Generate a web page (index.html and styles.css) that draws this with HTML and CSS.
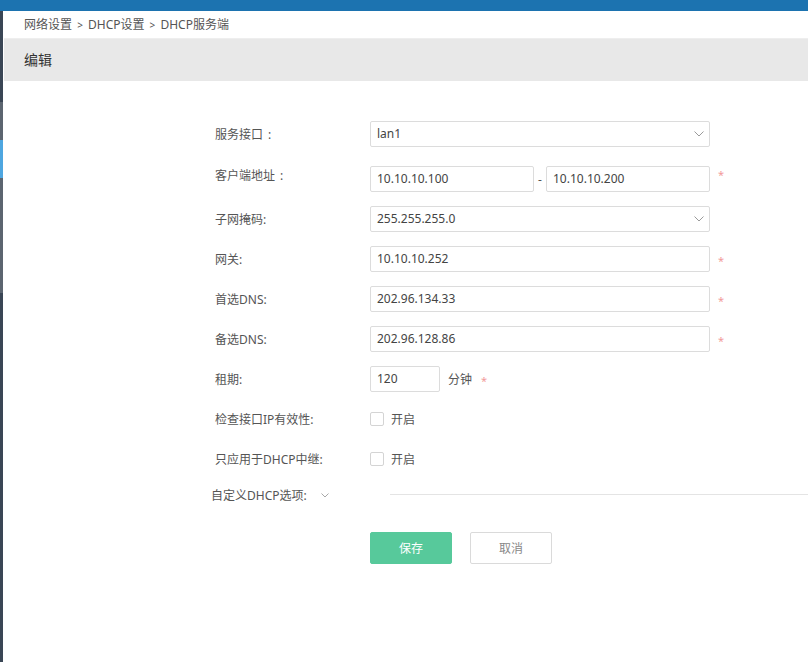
FILE: index.html
```html
<!DOCTYPE html>
<html lang="zh-CN">
<head>
<meta charset="utf-8">
<title>DHCP服务端</title>
<link rel="stylesheet" href="styles.css">
</head>
<body>
<div class="app">
  <div class="topbar"></div>
  <div class="main">
    <div class="sidebar">
      <div class="seg seg-dark-top"></div>
      <div class="seg seg-gray-a"></div>
      <div class="seg seg-blue"></div>
      <div class="seg seg-gray-b"></div>
      <div class="seg seg-dark-bottom"></div>
    </div>
    <div class="content">
      <div class="crumbs">网络设置 <span class="sep">&gt;</span> DHCP设置 <span class="sep">&gt;</span> DHCP服务端</div>
      <div class="header">编辑</div>
      <div class="form">
        <div class="row row-first">
          <div class="label">服务接口<span class="fw-colon">:</span></div>
          <div class="select wide">
            <span class="value">lan1</span>
            <svg class="chev" width="10" height="6" viewBox="0 0 10 6"><path d="M0.5 0.5 L5 5 L9.5 0.5" fill="none" stroke="#9a9a9a" stroke-width="1"/></svg>
          </div>
        </div>
        <div class="row">
          <div class="label label-up">客户端地址<span class="fw-colon">:</span></div>
          <div class="input half">10.10.10.100</div>
          <span class="dash">-</span>
          <div class="input half">10.10.10.200</div>
          <span class="req req-up">*</span>
        </div>
        <div class="row">
          <div class="label">子网掩码:</div>
          <div class="select wide">
            <span class="value">255.255.255.0</span>
            <svg class="chev" width="10" height="6" viewBox="0 0 10 6"><path d="M0.5 0.5 L5 5 L9.5 0.5" fill="none" stroke="#9a9a9a" stroke-width="1"/></svg>
          </div>
        </div>
        <div class="row">
          <div class="label">网关:</div>
          <div class="input wide">10.10.10.252</div>
          <span class="req">*</span>
        </div>
        <div class="row">
          <div class="label">首选DNS:</div>
          <div class="input wide">202.96.134.33</div>
          <span class="req">*</span>
        </div>
        <div class="row">
          <div class="label">备选DNS:</div>
          <div class="input wide">202.96.128.86</div>
          <span class="req">*</span>
        </div>
        <div class="row">
          <div class="label">租期:</div>
          <div class="input short">120</div>
          <span class="unit">分钟</span>
          <span class="req req-unit">*</span>
        </div>
        <div class="row">
          <div class="label">检查接口IP有效性:</div>
          <span class="checkbox"></span>
          <span class="check-text">开启</span>
        </div>
        <div class="row row-before-custom">
          <div class="label">只应用于DHCP中继:</div>
          <span class="checkbox"></span>
          <span class="check-text">开启</span>
        </div>
        <div class="row row-custom">
          <div class="custom-label">自定义DHCP选项:
            <svg class="custom-chev" width="8" height="5" viewBox="0 0 8 5"><path d="M0.5 0.5 L4 4 L7.5 0.5" fill="none" stroke="#a8a8a8" stroke-width="1"/></svg>
          </div>
          <div class="rule"></div>
        </div>
        <div class="actions">
          <button class="btn btn-save" type="button">保存</button>
          <button class="btn btn-cancel" type="button">取消</button>
        </div>
      </div>
    </div>
  </div>
</div>
</body>
</html>
```
FILE: styles.css
```css
* { box-sizing: border-box; }
html, body { margin: 0; padding: 0; }
body {
  font-family: "Noto Sans", "Noto Sans CJK SC", sans-serif;
  font-size: 12px;
  color: #555;
  background: #fff;
}
.app {
  display: flex;
  flex-direction: column;
  height: 662px;
  overflow: hidden;
}
.topbar {
  height: 11px;
  background: #1c73b0;
  flex: none;
}
.main {
  flex: 1;
  display: flex;
}
.sidebar {
  width: 3px;
  display: flex;
  flex-direction: column;
  flex: none;
}
.seg-dark-top { height: 91px; background: #3a4655; }
.seg-gray-a { height: 38px; background: #5c6570; }
.seg-blue { height: 38px; background: #4ea6e0; }
.seg-gray-b { height: 115px; background: #5c6570; }
.seg-dark-bottom { flex: 1; background: #3a4655; }
.content {
  flex: 1;
  margin-left: 1px;
}
.crumbs {
  height: 27px;
  line-height: 27px;
  padding-left: 20px;
  font-size: 12px;
  color: #555;
}
.crumbs .sep {
  font-size: 10px;
  padding: 0 2px;
}
.header {
  height: 43px;
  line-height: 41px;
  padding-left: 20px;
  background: #e8e8e8;
  border-top: 1px solid #eeeeee;
  font-size: 14px;
  color: #333;
}
.form {
  padding-top: 40px;
  padding-left: 211px;
}
.row {
  display: flex;
  align-items: center;
  height: 26px;
  margin-bottom: 14px;
}
.row-first { margin-bottom: 19px; }
.row-before-custom { margin-bottom: 10px; }
.label {
  width: 155px;
  flex: none;
  color: #555;
}
.fw-colon {
  margin-left: 5px;
}
.label-up { margin-bottom: 8px; }
.input, .select {
  height: 26px;
  border: 1px solid #dcdcdc;
  border-radius: 2px;
  padding-left: 6px;
  line-height: 24px;
  color: #444;
  font-size: 12px;
  flex: none;
  background: #fff;
}
.wide { width: 340px; }
.half { width: 164px; }
.short { width: 70px; }
.select {
  display: flex;
  align-items: center;
  justify-content: space-between;
  padding-right: 5px;
}
.chev { display: block; }
.dash {
  width: 12px;
  text-align: center;
  color: #555;
}
.req {
  color: #f29a9a;
  margin-left: 8px;
  font-size: 11px;
  line-height: 1;
  margin-top: 2px;
}
.req-up { margin-top: 0; margin-bottom: 9px; }
.unit {
  margin-left: 8px;
  color: #555;
}
.req-unit { margin-left: 9px; }
.checkbox {
  width: 14px;
  height: 14px;
  border: 1px solid #d4d4d4;
  border-radius: 2px;
  flex: none;
  background: #fff;
}
.check-text {
  margin-left: 7px;
  color: #555;
}
.row-custom {
  margin-left: -4px;
  margin-bottom: 24px;
}
.custom-label {
  width: 159px;
  flex: none;
  display: flex;
  align-items: center;
  color: #555;
}
.custom-chev {
  margin-left: 14px;
  display: block;
}
.rule {
  flex: 1;
  height: 1px;
  background: #e4e4e4;
  margin-left: 20px;
  margin-top: -1px;
}
.actions {
  display: flex;
  gap: 18px;
  margin-left: 155px;
}
.btn {
  width: 82px;
  height: 32px;
  border-radius: 2px;
  font-family: "Noto Sans", "Noto Sans CJK SC", sans-serif;
  font-size: 12px;
  cursor: pointer;
  padding: 0;
}
.btn-save {
  background: #57c99b;
  border: 1px solid #57c99b;
  color: #fff;
}
.btn-cancel {
  background: #fff;
  border: 1px solid #dadada;
  color: #888;
}
```
